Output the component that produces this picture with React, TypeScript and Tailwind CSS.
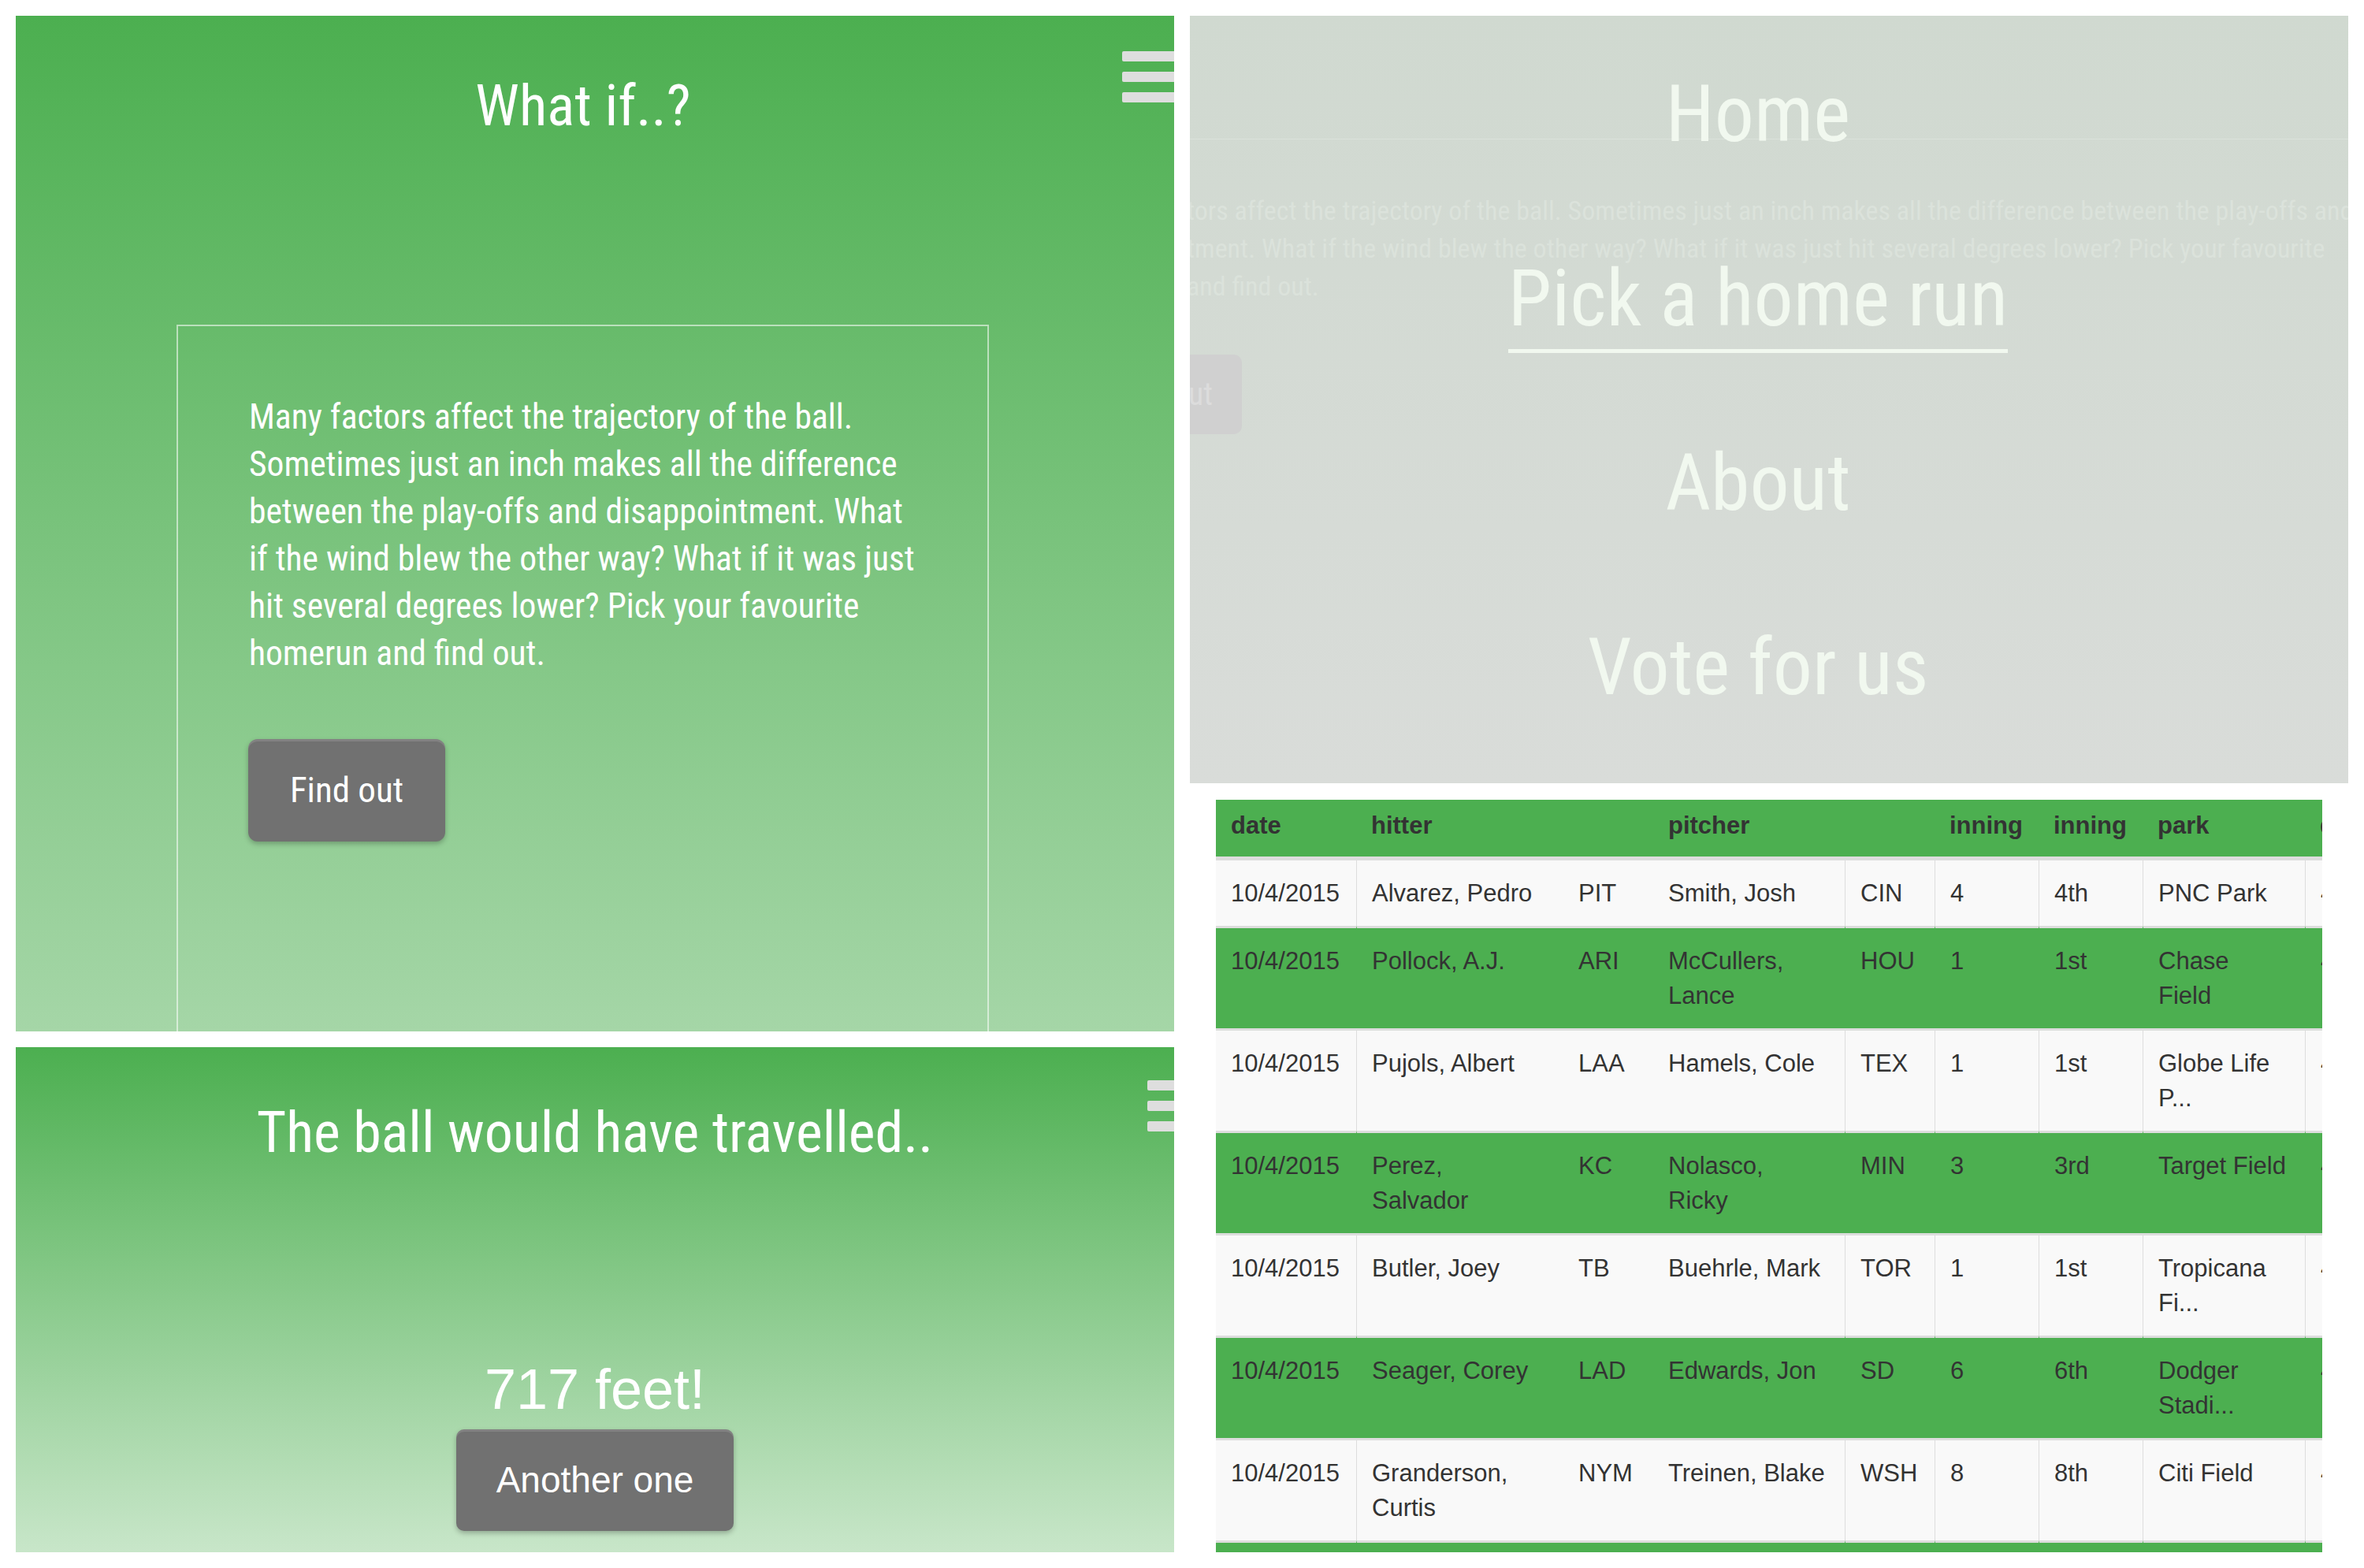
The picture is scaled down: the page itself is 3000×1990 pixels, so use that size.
const cond = "font-['Roboto_Condensed',Roboto,sans-serif] font-stretch-condensed"
const arial = "font-['Liberation_Sans',Arial,sans-serif]"

const intro = [
  "Many factors affect the trajectory of the ball.",
  "Sometimes just an inch makes all the difference",
  "between the play-offs and disappointment. What",
  "if the wind blew the other way? What if it was just",
  "hit several degrees lower? Pick your favourite",
  "homerun and find out.",
]

const faded = [
  "tors affect the trajectory of the ball. Sometimes just an inch makes all the difference between the play-offs and",
  "tment. What if the wind blew the other way? What if it was just hit several degrees lower? Pick your favourite",
  "and find out.",
]

const menu = ["Home", "Pick a home run", "About", "Vote for us"]

const cols = ["w-[178px]", "w-[263px]", "w-[114px]", "w-[243px]", "w-[114px]", "w-[132px]", "w-[132px]", "w-[206px]", "w-[100px]"]
const headers = ["date", "hitter", "", "pitcher", "", "inning", "inning", "park", "distance"]
// columns that show a left rule in the light rows
const ruled = [false, true, false, false, true, true, true, true, true]

const rows = [
  ["10/4/2015", "Alvarez, Pedro", "PIT", "Smith, Josh", "CIN", "4", "4th", "PNC Park", "438"],
  ["10/4/2015", "Pollock, A.J.", "ARI", "McCullers,\nLance", "HOU", "1", "1st", "Chase\nField", "406"],
  ["10/4/2015", "Pujols, Albert", "LAA", "Hamels, Cole", "TEX", "1", "1st", "Globe Life\nP...", "412"],
  ["10/4/2015", "Perez,\nSalvador", "KC", "Nolasco,\nRicky", "MIN", "3", "3rd", "Target Field", "430"],
  ["10/4/2015", "Butler, Joey", "TB", "Buehrle, Mark", "TOR", "1", "1st", "Tropicana\nFi...", "404"],
  ["10/4/2015", "Seager, Corey", "LAD", "Edwards, Jon", "SD", "6", "6th", "Dodger\nStadi...", "421"],
  ["10/4/2015", "Granderson,\nCurtis", "NYM", "Treinen, Blake", "WSH", "8", "8th", "Citi Field", "408"],
  ["10/4/2015", "Molina, Yadier", "STL", "Arrieta, Jake", "CHC", "2", "2nd", "Busch Stadium", "399"],
]

function Burger({ className }: { className: string }) {
  return (
    <div className={`absolute right-0 flex flex-col gap-[13px] ${className}`}>
      <div className="h-[13px] bg-[#dedede] rounded-l-[2px]"></div>
      <div className="h-[13px] bg-[#dedede] rounded-l-[2px]"></div>
      <div className="h-[13px] bg-[#dedede] rounded-l-[2px]"></div>
    </div>
  )
}

function WhatIf() {
  return (
    <div className="relative h-[1289px] overflow-hidden bg-linear-to-b/srgb from-[#4caf50] to-[#a5d6a7]">
      <Burger className="top-[45px] w-[66px]" />
      <h1 className={`${cond} pt-[78px] pr-[30px] text-center text-[73px] leading-none text-white`}>What if..?</h1>
      <div className="mt-[241px] ml-[204px] w-[1031px] h-[1000px] border-2 border-white/55">
        <p className={`${cond} pt-[86px] px-[90px] text-[43.5px] leading-[60px] text-white whitespace-nowrap`}>
          {intro.map((line) => (
            <span key={line} className="block">{line}</span>
          ))}
        </p>
        <button className={`${cond} mt-[78px] ml-[89px] w-[250px] h-[130px] rounded-[12px] bg-[#717171] text-[45px] text-white shadow-[0_3px_6px_rgba(0,0,0,0.25),inset_0_3px_0_rgba(255,255,255,0.12)]`}>
          Find out
        </button>
      </div>
    </div>
  )
}

function Result() {
  return (
    <div className="relative flex-1 overflow-hidden bg-linear-to-b/srgb from-[#4caf50] to-[#c8e6c9] flex flex-col items-center">
      <Burger className="top-[42px] w-[34px]" />
      <h2 className={`${cond} pt-[73px] text-[72px] leading-none text-white`}>The ball would have travelled..</h2>
      <div className={`${arial} mt-[253px] text-[72px] leading-none text-white`}>717 feet!</div>
      <button className={`${arial} mt-[15px] w-[352px] h-[129px] rounded-[10px] bg-[#717171] text-[46px] text-white shadow-[0_3px_6px_rgba(0,0,0,0.25),inset_0_3px_0_rgba(255,255,255,0.12)]`}>
        Another one
      </button>
    </div>
  )
}

function MenuOverlay() {
  return (
    <div className="relative h-[974px] overflow-hidden bg-linear-to-b/srgb from-[#d0d9d0] to-[#d9dcd9]">
      {/* page behind the menu */}
      <div className="h-[157px] border-b border-[#dbe2db]"></div>
      <div className={`${cond} mt-[66px] -ml-[4px] text-[34px] leading-[48px] text-[#dbe2db] whitespace-nowrap`}>
        {faded.map((line) => (
          <div key={line}>{line}</div>
        ))}
      </div>
      <div className={`${cond} mt-[63px] w-[68px] h-[101px] rounded-r-[10px] bg-[#d0d0d0] flex items-center -ml-[2px] text-[40px] text-[#dcdcdc]`}>
        ut
      </div>

      <div className={`${cond} absolute inset-0 flex flex-col items-center pt-[75px] pr-[28px] gap-[134px] text-[100px] leading-none text-[#f1f8ef]`}>
        {menu.map((item) => (
          <div
            key={item}
            className={item === "Pick a home run" ? "border-b-[5px] border-[#f1f8ef] pb-[14px] -mb-[19px]" : ""}
          >
            {item}
          </div>
        ))}
      </div>
    </div>
  )
}

function HomeRuns() {
  return (
    <div className="mt-[21px] mx-[33px] flex-1 overflow-hidden">
      <table className={`${arial} table-fixed w-[1482px] border-separate border-spacing-0 text-[31px] text-[#333333]`}>
        <colgroup>
          {cols.map((c, i) => (
            <col key={i} className={c} />
          ))}
        </colgroup>
        <thead>
          <tr className="bg-[#4caf50]">
            {headers.map((h, i) => (
              <th
                key={i}
                className="text-left align-bottom font-bold px-[19px] pt-[10px] pb-[17px] leading-[45px] border-b-[5px] border-[#dddddd] whitespace-nowrap"
              >
                {h}
              </th>
            ))}
          </tr>
        </thead>
        <tbody>
          {rows.map((row, r) => {
            const light = r % 2 === 0
            return (
              <tr key={r} className={light ? "bg-[#f9f9f9]" : "bg-[#4caf50]"}>
                {row.map((cell, i) => (
                  <td
                    key={i}
                    className={`align-top px-[19px] pt-[20px] pb-[19px] leading-[44px] whitespace-pre overflow-hidden ${r > 0 ? "border-t-[3px] border-t-[#dddddd]" : ""} ${
                      ruled[i] ? (light ? "border-l border-l-[#dddddd]" : "border-l border-l-[#4caf50]") : ""
                    }`}
                  >
                    {cell}
                  </td>
                ))}
              </tr>
            )
          })}
        </tbody>
      </table>
    </div>
  )
}

export default function App() {
  return (
    <div className="w-[3000px] h-[1990px] bg-white p-[20px] grid grid-cols-2 gap-x-[20px]">
      <div className="flex flex-col gap-[20px] h-[1950px]">
        <WhatIf />
        <Result />
      </div>
      <div className="flex flex-col h-[1950px]">
        <MenuOverlay />
        <HomeRuns />
      </div>
    </div>
  )
}
